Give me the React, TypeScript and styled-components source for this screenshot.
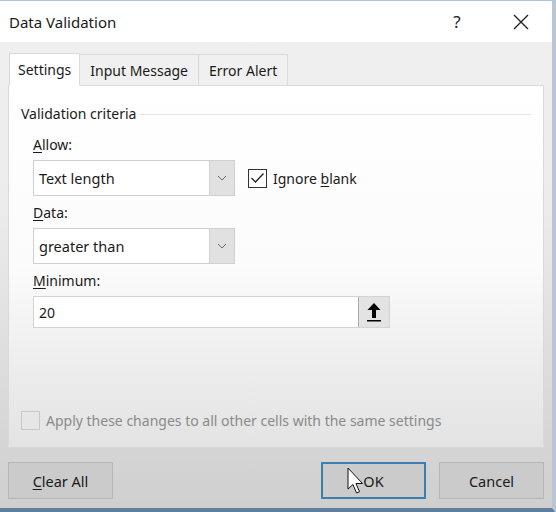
import styled, { createGlobalStyle } from "styled-components";

const GlobalStyle = createGlobalStyle`
  html, body {
    margin: 0;
    padding: 0;
    background: #c9d3dc;
  }
  body {
    font-family: "Noto Sans", "Open Sans", sans-serif;
    color: #1a1a1a;
  }
`;

const Window = styled.div`
  width: 552px;
  height: 507px;
  border-top: 1px solid #a9c6e0;
  border-right: 4px solid #b9c7d3;
  border-bottom: 5px solid #5f7f9c;
  display: flex;
  flex-direction: column;
  background: linear-gradient(#f0f0f0 0%, #ececec 40%, #d9d9d9 80%, #cfcfcf 100%);
  overflow: hidden;
  position: relative;
`;

const TitleBar = styled.div`
  height: 41px;
  background: #fff;
  display: flex;
  align-items: center;
  padding-left: 9px;
  font-size: 15px;
`;

const Title = styled.div`
  flex: 1;
`;

const TitleControls = styled.div`
  display: flex;
  align-items: center;
  gap: 11px;
`;

const TitleButton = styled.div<{ width: number }>`
  width: ${(p) => p.width}px;
  display: flex;
  justify-content: center;
  font-size: 17px;
  color: #222;
`;

const Body = styled.div`
  flex: 1;
  padding: 10px 8px 0 8px;
  display: flex;
  flex-direction: column;
`;

const TabRow = styled.div`
  display: flex;
  align-items: flex-end;
  height: 33px;
  padding-left: 1px;
`;

const Tab = styled.div<{ active?: boolean }>`
  height: ${(p) => (p.active ? 33 : 32)}px;
  padding: 0 ${(p) => (p.active ? 8 : 10)}px;
  box-sizing: border-box;
  display: flex;
  align-items: center;
  font-size: 14px;
  background: ${(p) => (p.active ? "#fff" : "#f0f0f0")};
  border: 1px solid #dadada;
  border-bottom: ${(p) => (p.active ? "1px solid #fff" : "1px solid #dadada")};
  border-left: ${(p) => (p.active ? "1px solid #dadada" : "none")};
  margin-bottom: -1px;
  position: relative;
  z-index: ${(p) => (p.active ? 2 : 1)};
`;

const Panel = styled.div`
  width: 536px;
  height: 363px;
  box-sizing: border-box;
  border: 1px solid #d9d9d9;
  background: linear-gradient(#ffffff 0%, #fbfbfb 50%, #ececec 80%, #e3e3e3 100%);
  padding: 17px 12px 0 12px;
  display: flex;
  flex-direction: column;
`;

const GroupHeader = styled.div`
  display: flex;
  align-items: center;
  gap: 4px;
  font-size: 14px;
  height: 20px;
  &::after {
    content: "";
    flex: 1;
    height: 1px;
    background: #e3e3e3;
    margin-top: 2px;
  }
`;

const Fields = styled.div`
  padding-left: 12px;
  margin-top: 12px;
  display: flex;
  flex-direction: column;
`;

const Label = styled.div`
  font-size: 14px;
  height: 20px;
  line-height: 20px;
  margin-bottom: 5px;
  u {
    text-decoration-thickness: 1px;
    text-underline-offset: 2px;
  }
`;

const FieldRow = styled.div`
  display: flex;
  align-items: center;
  gap: 13px;
  margin-bottom: 7px;
`;

const Combo = styled.div`
  width: 202px;
  height: 36px;
  box-sizing: border-box;
  border: 1px solid #cfcfcf;
  background: #fff;
  display: flex;
  align-items: stretch;
`;

const ComboText = styled.div`
  flex: 1;
  display: flex;
  align-items: center;
  padding-left: 5px;
  font-size: 14.5px;
`;

const ComboButton = styled.div`
  width: 24px;
  background: #e1e1e1;
  border-left: 1px solid #d2d2d2;
  display: flex;
  align-items: center;
  justify-content: center;
`;

const CheckLabel = styled.label<{ disabled?: boolean }>`
  display: flex;
  align-items: center;
  gap: 6px;
  font-size: 14px;
  color: ${(p) => (p.disabled ? "#8a8a8a" : "#1a1a1a")};
  u {
    text-decoration-thickness: 1px;
    text-underline-offset: 2px;
  }
`;

const Box = styled.span<{ disabled?: boolean }>`
  width: 19px;
  height: 19px;
  box-sizing: border-box;
  border: 1px solid ${(p) => (p.disabled ? "#c8c8c8" : "#333")};
  background: ${(p) => (p.disabled ? "#e6e6e6" : "#fff")};
  display: flex;
  align-items: center;
  justify-content: center;
`;

const NumberInput = styled.div`
  width: 357px;
  height: 32px;
  box-sizing: border-box;
  border: 1px solid #d3d3d3;
  background: #fff;
  display: flex;
  align-items: stretch;
`;

const InputText = styled.div`
  flex: 1;
  display: flex;
  align-items: center;
  padding-left: 5px;
  font-size: 14px;
`;

const RefButton = styled.div`
  width: 30px;
  background: #e3e3e3;
  border-left: 1px solid #adadad;
  display: flex;
  align-items: center;
  justify-content: center;
`;

const ApplyRow = styled.div`
  margin-top: auto;
  margin-bottom: 17px;
`;

const Footer = styled.div`
  display: flex;
  align-items: center;
  padding-top: 14px;
`;

const Button = styled.div<{ primary?: boolean }>`
  width: 105px;
  height: 37px;
  box-sizing: border-box;
  border: ${(p) => (p.primary ? "2px solid #3f7cb0" : "1px solid #b5b5b5")};
  background: #cbcbcb;
  display: flex;
  align-items: center;
  justify-content: center;
  font-size: 14.5px;
  position: relative;
  u {
    text-decoration-thickness: 1px;
    text-underline-offset: 2px;
  }
`;

const Spacer = styled.div`
  flex: 1;
`;

const ButtonGap = styled.div`
  width: 13px;
`;

const Cursor = styled.svg`
  position: absolute;
  left: 24px;
  top: 3px;
`;

const Chevron = () => (
  <svg width="10" height="6" viewBox="0 0 10 6">
    <path d="M1 1 L5 5 L9 1" stroke="#6a6a6a" strokeWidth="1" fill="none" />
  </svg>
);

export default function App() {
  return (
    <>
      <GlobalStyle />
      <Window>
        <TitleBar>
          <Title>Data Validation</Title>
          <TitleControls>
            <TitleButton width={44}>?</TitleButton>
            <TitleButton width={62}>
              <svg width="16" height="16" viewBox="0 0 16 16">
                <path d="M1 1 L15 15 M15 1 L1 15" stroke="#222" strokeWidth="1.4" />
              </svg>
            </TitleButton>
          </TitleControls>
        </TitleBar>
        <Body>
          <TabRow>
            <Tab active>Settings</Tab>
            <Tab>Input Message</Tab>
            <Tab>Error Alert</Tab>
          </TabRow>
          <Panel>
            <GroupHeader>Validation criteria</GroupHeader>
            <Fields>
              <Label>
                <u>A</u>llow:
              </Label>
              <FieldRow>
                <Combo>
                  <ComboText>Text length</ComboText>
                  <ComboButton>
                    <Chevron />
                  </ComboButton>
                </Combo>
                <CheckLabel>
                  <Box>
                    <svg width="15" height="12" viewBox="0 0 15 12">
                      <path d="M1.5 6 L5.5 10 L13.5 1.5" stroke="#222" strokeWidth="1.3" fill="none" />
                    </svg>
                  </Box>
                  <span>
                    Ignore <u>b</u>lank
                  </span>
                </CheckLabel>
              </FieldRow>
              <Label>
                <u>D</u>ata:
              </Label>
              <FieldRow>
                <Combo>
                  <ComboText>greater than</ComboText>
                  <ComboButton>
                    <Chevron />
                  </ComboButton>
                </Combo>
              </FieldRow>
              <Label>
                <u>M</u>inimum:
              </Label>
              <NumberInput>
                <InputText>20</InputText>
                <RefButton>
                  <svg width="16" height="20" viewBox="0 0 16 20">
                    <path d="M8 1 L14.5 8 L10 8 L10 16 L6 16 L6 8 L1.5 8 Z" fill="#000" />
                    <rect x="1" y="18" width="14" height="1.5" fill="#000" />
                  </svg>
                </RefButton>
              </NumberInput>
            </Fields>
            <ApplyRow>
              <CheckLabel disabled>
                <Box disabled />
                <span>Apply these changes to all other cells with the same settings</span>
              </CheckLabel>
            </ApplyRow>
          </Panel>
          <Footer>
            <Button>
              <span>
                <u>C</u>lear All
              </span>
            </Button>
            <Spacer />
            <Button primary>
              OK
              <Cursor width="18" height="30" viewBox="0 0 18 30">
                <path
                  d="M1 1 L1 22 L6 17.5 L9.5 26 L12.5 24.7 L9 16.5 L15.5 16.5 Z"
                  fill="#fff"
                  stroke="#111"
                  strokeWidth="1"
                  strokeLinejoin="round"
                />
              </Cursor>
            </Button>
            <ButtonGap />
            <Button>Cancel</Button>
          </Footer>
        </Body>
      </Window>
    </>
  );
}
